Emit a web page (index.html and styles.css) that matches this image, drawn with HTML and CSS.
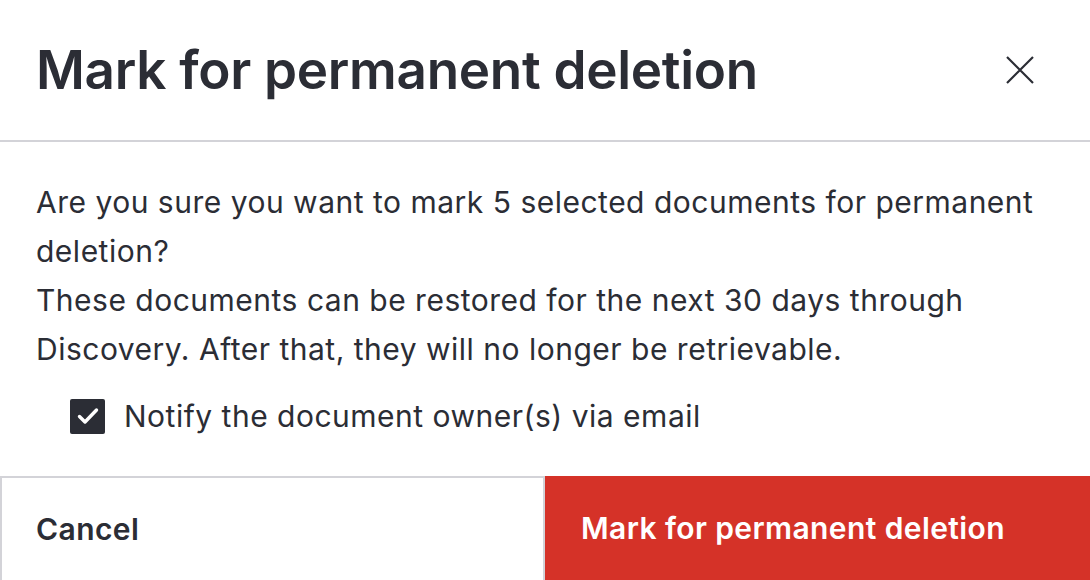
FILE: index.html
```html
<!DOCTYPE html>
<html lang="en">
<head>
<meta charset="utf-8">
<title>Mark for permanent deletion</title>
<link rel="stylesheet" href="styles.css">
</head>
<body>
<div class="modal" role="dialog" aria-labelledby="modal-title">
  <header class="modal-header">
    <h1 id="modal-title" class="modal-title">Mark for permanent deletion</h1>
    <button class="close-btn" aria-label="Close">
      <svg width="28" height="28" viewBox="0 0 28 28" aria-hidden="true">
        <path d="M1 1 L27 27 M27 1 L1 27" stroke="#2b2d35" stroke-width="2.2" fill="none"/>
      </svg>
    </button>
  </header>
  <div class="modal-body">
    <p class="body-text">Are you sure you want to mark 5 selected documents for permanent deletion?<br>These documents can be restored for the next 30 days through Discovery. After that, they will no longer be retrievable.</p>
    <label class="check-row">
      <span class="checkbox">
        <svg width="22" height="18" viewBox="0 0 22 18" aria-hidden="true">
          <path d="M2.5 9.5 L8 15 L19.5 3" stroke="#fff" stroke-width="3.4" fill="none" stroke-linecap="round" stroke-linejoin="round"/>
        </svg>
      </span>
      <span class="check-label">Notify the document owner(s) via email</span>
    </label>
  </div>
  <footer class="modal-footer">
    <button class="btn btn-secondary">Cancel</button>
    <button class="btn btn-danger">Mark for permanent deletion</button>
  </footer>
</div>
</body>
</html>
```
FILE: styles.css
```css
* { box-sizing: border-box; }
html, body { margin: 0; padding: 0; }
body {
  width: 1090px;
  height: 580px;
  overflow: hidden;
  background: #ffffff;
  font-family: "Inter", "Noto Sans", sans-serif;
  color: #2b2d35;
}
.modal {
  display: flex;
  flex-direction: column;
  height: 580px;
}
.modal-header {
  height: 142px;
  display: flex;
  align-items: center;
  justify-content: space-between;
  padding: 0 56px 0 36px;
  border-bottom: 2px solid #d3d3d8;
}
.modal-title {
  margin: 0;
  font-size: 53px;
  font-weight: 600;
  letter-spacing: -0.3px;
  line-height: 1;
}
.close-btn {
  background: none;
  border: 0;
  padding: 0;
  display: flex;
  cursor: pointer;
}
.modal-body {
  flex: 1;
  padding: 36px 36px 0 36px;
}
.body-text {
  margin: 0;
  font-size: 30px;
  letter-spacing: 0.5px;
  line-height: 49px;
  font-weight: 400;
}
.check-row {
  display: flex;
  align-items: center;
  gap: 19px;
  margin: 22px 0 0 34px;
}
.checkbox {
  width: 35px;
  height: 35px;
  background: #2b2d35;
  border-radius: 2px;
  display: flex;
  align-items: center;
  justify-content: center;
}
.check-label {
  font-size: 30px;
  letter-spacing: 0.5px;
  line-height: 40px;
}
.modal-footer {
  display: grid;
  grid-template-columns: 1fr 1fr;
  height: 104px;
}
.btn {
  font-family: inherit;
  font-size: 30px;
  letter-spacing: 0.4px;
  font-weight: 600;
  text-align: left;
  padding: 0 36px;
  border: 0;
  margin: 0;
  cursor: pointer;
}
.btn-secondary {
  background: #ffffff;
  color: #2b2d35;
  border: 2px solid #d3d3d8;
  border-bottom: 0;
  padding-left: 34px;
}
.btn-danger {
  background: #d53228;
  color: #ffffff;
}
```
